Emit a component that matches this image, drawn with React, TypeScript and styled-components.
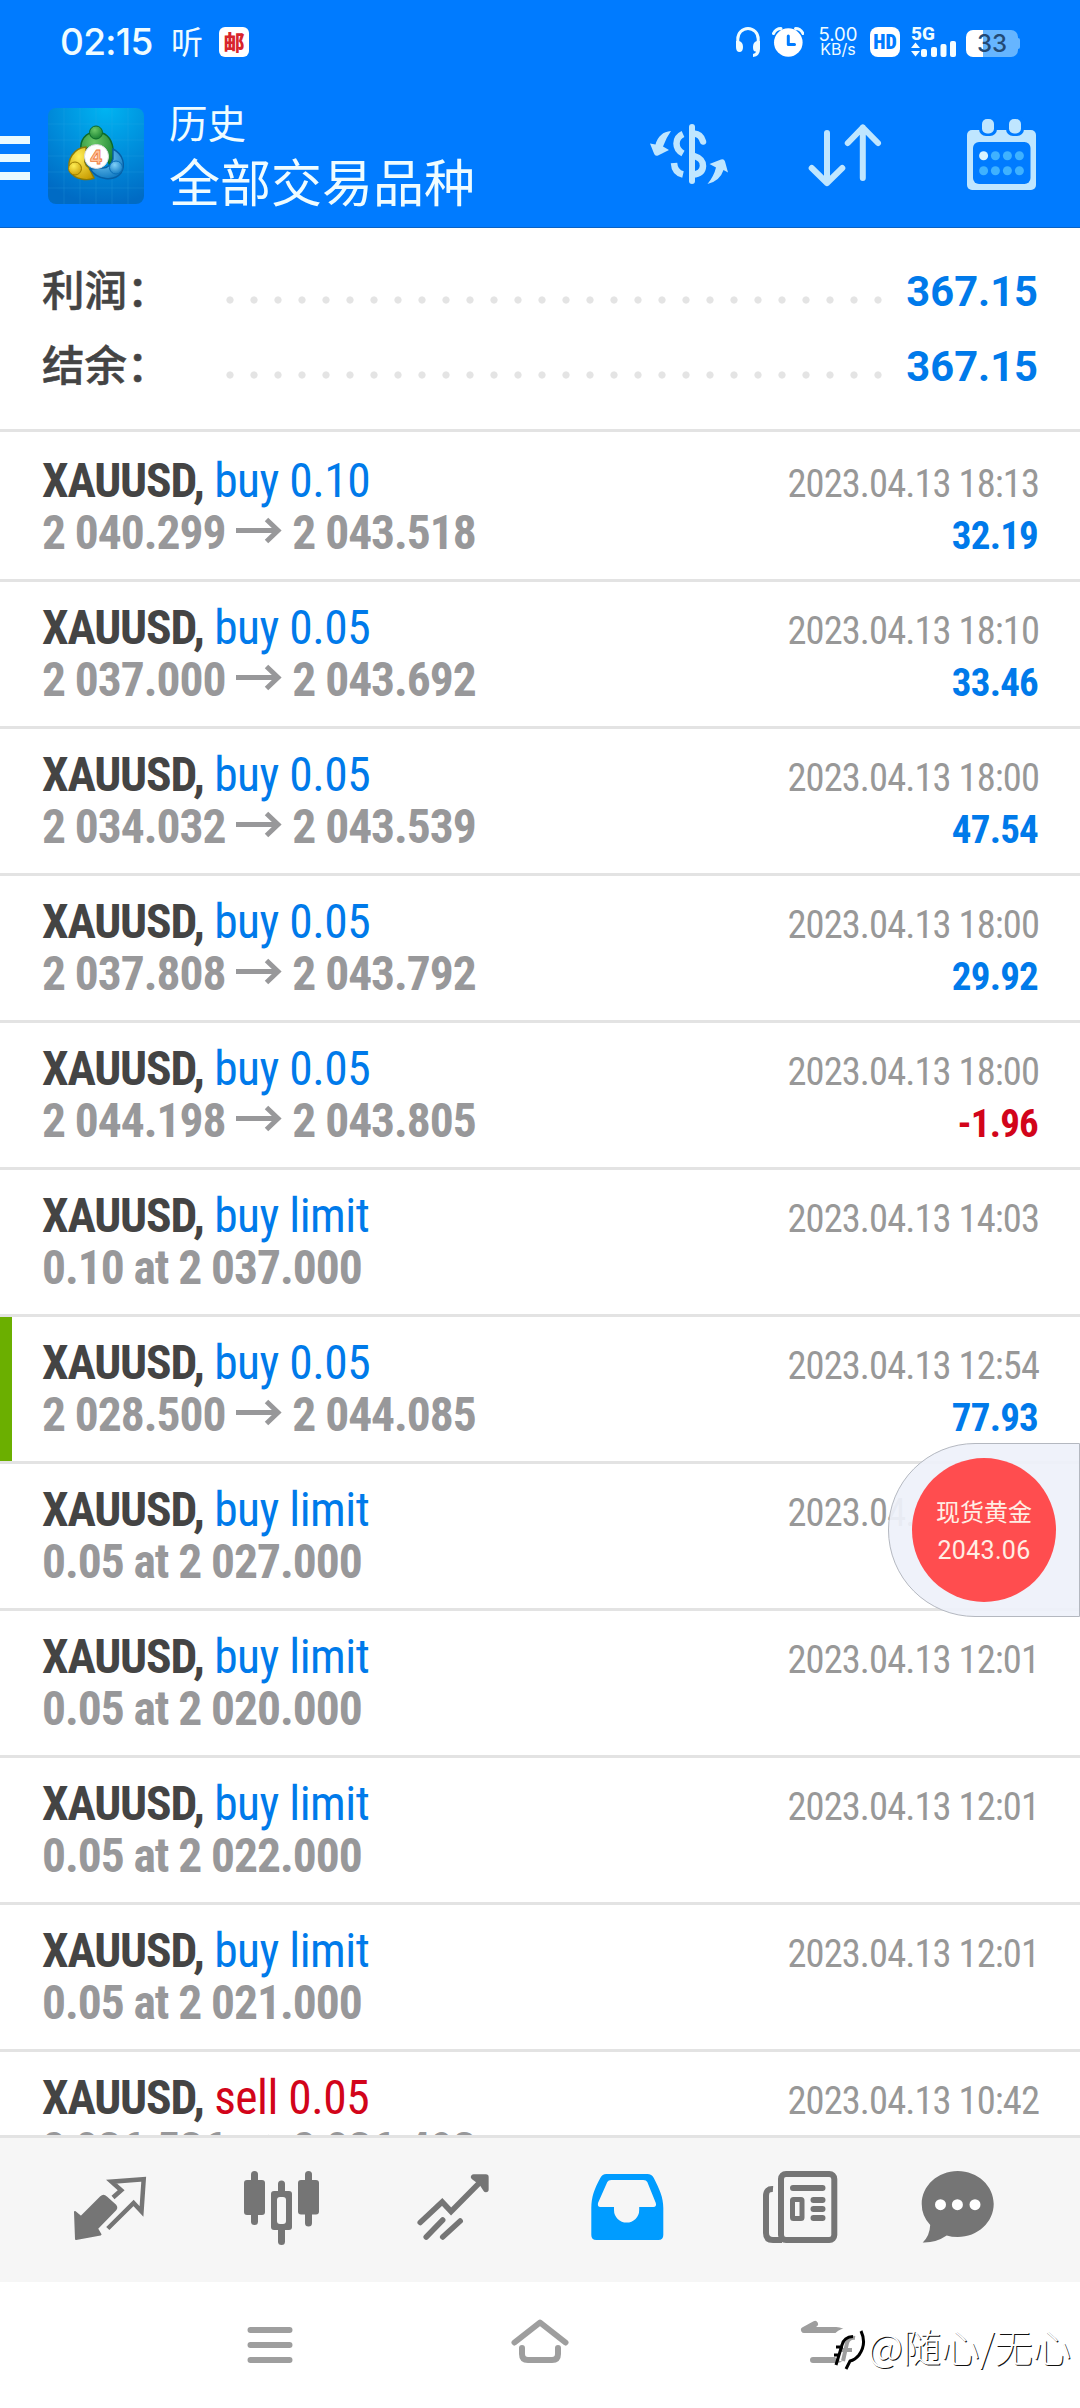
import React from 'react';
import styled, { createGlobalStyle } from 'styled-components';

const BLUE = '#007bff';
const ICE = '#bfe6ff';
const GRAY = '#757575';

const GlobalStyle = createGlobalStyle`
  * { box-sizing: border-box; }
  body { margin: 0; background: #fff; }
`;

const Screen = styled.div`
  position: relative;
  width: 1080px;
  height: 2408px;
  display: flex;
  flex-direction: column;
  overflow: hidden;
  background: #fff;
  font-family: Roboto, 'Noto Sans CJK SC', sans-serif;
  white-space: nowrap;
`;

const Header = styled.header`
  flex: none;
  height: 228px;
  background: ${BLUE};
  border-bottom: 1px solid #0a62c4;
  color: #effcff;
`;

const StatusBar = styled.div`
  height: 84px;
  padding: 0 60px 0 60px;
  display: flex;
  align-items: center;
  justify-content: space-between;
`;

const StatusGroup = styled.div`
  display: flex;
  align-items: center;
  height: 30px;
`;

const Clock = styled.span`
  width: 111px;
  font: 500 37px/30px Inter, sans-serif;
  letter-spacing: -0.7px;
`;

const ListenMark = styled.span`
  width: 48px;
  padding-bottom: 4px;
  font: 400 32px/30px 'Noto Sans CJK SC', sans-serif;
`;

const MailBadge = styled.span`
  width: 30px;
  height: 30px;
  border-radius: 6px;
  background: #fff;
  color: #d8252c;
  text-align: center;
  font: 900 21px/28px 'Noto Sans CJK SC', sans-serif;
`;

const NetSpeed = styled.div`
  width: 40px;
  margin-left: 14px;
  display: flex;
  flex-direction: column;
  align-items: center;
  font: 400 18.6px/15px Inter, sans-serif;
`;

const SpeedUnit = styled.span`
  font-size: 16px;
`;

const HdBadge = styled.span`
  width: 30px;
  height: 30px;
  margin-left: 12px;
  border-radius: 8px;
  background: #fff;
  color: ${BLUE};
  text-align: center;
  font: 900 20px/31px 'Roboto Condensed', sans-serif;
`;

const Signal = styled.div`
  width: 46px;
  height: 30px;
  margin-left: 11px;
  display: flex;
  flex-direction: column;
  font: 800 19px/14px Roboto, sans-serif;
`;

const Battery = styled.div`
  width: 52px;
  height: 27px;
  margin: 3px 0 0 9px;
  border-radius: 7px;
  background: linear-gradient(90deg, #fff 17px, #66b5ff 17px);
  color: #234a75;
  text-align: center;
  font: 500 24px/28px Inter, sans-serif;
`;

const BatteryTip = styled.span`
  width: 2px;
  height: 11px;
  margin-top: 3px;
  border-radius: 0 2px 2px 0;
  background: #66b5ff;
`;

const TitleBar = styled.div`
  height: 143px;
  display: flex;
  align-items: flex-start;
`;

const MenuBars = styled.div`
  width: 30px;
  padding-top: 52px;
  display: flex;
  flex-direction: column;
  gap: 10px;
`;

const MenuBar = styled.span`
  height: 8px;
  background: #e9faff;
`;

const Logo = styled.svg`
  margin: 24px 0 0 18px;
  flex: none;
`;

const Titles = styled.div`
  width: 480px;
  padding: 13px 0 0 25px;
  display: flex;
  flex-direction: column;
  font-family: 'Noto Sans CJK SC', sans-serif;
`;

const Section = styled.span`
  font-size: 38.5px;
  line-height: 49px;
`;

const Heading = styled.h1`
  margin: 0;
  font-size: 51px;
  font-weight: 400;
  line-height: 68px;
`;

const Actions = styled.div`
  display: flex;
  padding: 32px 0 0 26px;
`;

const Summary = styled.section`
  flex: none;
  height: 204px;
  padding: 22px 42px 0;
  border-bottom: 3px solid #e3e3e3;
`;

const SummaryRow = styled.div`
  height: 75px;
  display: flex;
  align-items: baseline;
  justify-content: space-between;
  line-height: 75px;
`;

const SummaryLabel = styled.span`
  width: 176px;
  color: #444;
  font: 500 42.5px/75px 'Noto Sans CJK SC', sans-serif;
  -webkit-text-stroke: 0.5px #444;
`;

const Dots = styled.span`
  width: 672px;
  height: 12px;
  background: radial-gradient(circle at 12px 6px, #e4e4e4 3.2px, transparent 4px) 0 0 / 24px 12px repeat-x;
`;

const SummaryValue = styled.span`
  flex: 1;
  text-align: right;
  color: #007aea;
  font-size: 41.7px;
  font-weight: 700;
`;

const DealList = styled.main`
  flex: none;
  height: 1703px;
  padding-top: 3px;
  overflow: hidden;
`;

const Deal = styled.article`
  height: 147px;
  display: flex;
  border-bottom: 3px solid #e3e3e3;
`;

const Marker = styled.span<{ $on?: boolean }>`
  width: 12px;
  background: ${p => (p.$on ? '#6baf00' : 'transparent')};
`;

const DealBody = styled.div`
  flex: 1;
  padding: 21px 42px 0 30px;
  font-family: 'Roboto Condensed', Roboto, sans-serif;
`;

const Line = styled.div`
  height: 51.5px;
  display: flex;
  align-items: baseline;
  justify-content: space-between;
  line-height: 51.5px;
`;

const DealTitle = styled.div`
  display: flex;
  gap: 10.5px;
  font-size: 47.5px;
`;

const Ticker = styled.span`
  color: #444;
  font-weight: 700;
  letter-spacing: -1.2px;
`;

const Operation = styled.span<{ $sell?: boolean }>`
  color: ${p => (p.$sell ? '#d2041a' : '#007aea')};
  letter-spacing: -0.5px;
`;

const Prices = styled.div`
  display: flex;
  align-items: baseline;
  gap: 10.5px;
  color: #98989a;
  font-size: 47.5px;
  font-weight: 700;
  letter-spacing: -1.05px;
`;

const Time = styled.span`
  margin-right: -1px;
  color: #989898;
  font-size: 38.5px;
  letter-spacing: -0.92px;
`;

const Profit = styled.span<{ $loss?: boolean }>`
  color: ${p => (p.$loss ? '#d2041a' : '#007aea')};
  font-size: 39px;
  font-weight: 700;
  letter-spacing: -0.8px;
`;

const TabBar = styled.nav`
  flex: none;
  height: 147px;
  padding: 0 20px;
  display: flex;
  border-top: 3px solid #e3e3e3;
  background: #f6f6f6;
`;

const Tab = styled.div`
  flex: 1;
  display: flex;
  align-items: flex-start;
  justify-content: center;
  padding-top: 27px;
`;

const SystemBar = styled.footer`
  flex: none;
  height: 126px;
  padding: 34px 90px 0;
  display: flex;
  justify-content: space-between;
`;

const FloatingQuote = styled.aside`
  position: absolute;
  right: 0;
  top: 1443px;
  width: 192px;
  height: 174px;
  padding: 14px 0 0 23px;
  border: 1px solid #b4b8c0;
  border-radius: 87px 0 0 87px;
  background: rgba(238, 241, 250, 0.93);
`;

const QuoteDisc = styled.div`
  width: 144px;
  height: 144px;
  padding-top: 33px;
  border-radius: 50%;
  background: #ff4d4f;
  color: #ffeee4;
  text-align: center;
`;

const QuoteName = styled.div`
  font: 400 24px/40px 'Noto Sans CJK SC', sans-serif;
`;

const QuotePrice = styled.div`
  font-size: 25px;
  line-height: 40px;
  letter-spacing: 0.3px;
`;

const Watermark = styled.div`
  position: absolute;
  left: 830px;
  top: 2321px;
  display: flex;
  align-items: center;
  gap: 2px;
  color: #fff;
  font: 300 38.3px/46px 'Noto Sans CJK SC', sans-serif;
  text-shadow: 1px 1px 0 #111;
`;

type Item = {
  op: string; time: string; sell?: boolean; marked?: boolean;
  from?: string; to?: string; order?: string; profit?: string;
};

const deals: Item[] = [
  { op: 'buy 0.10', time: '2023.04.13 18:13', from: '2 040.299', to: '2 043.518', profit: '32.19' },
  { op: 'buy 0.05', time: '2023.04.13 18:10', from: '2 037.000', to: '2 043.692', profit: '33.46' },
  { op: 'buy 0.05', time: '2023.04.13 18:00', from: '2 034.032', to: '2 043.539', profit: '47.54' },
  { op: 'buy 0.05', time: '2023.04.13 18:00', from: '2 037.808', to: '2 043.792', profit: '29.92' },
  { op: 'buy 0.05', time: '2023.04.13 18:00', from: '2 044.198', to: '2 043.805', profit: '-1.96' },
  { op: 'buy limit', time: '2023.04.13 14:03', order: '0.10 at 2 037.000' },
  { op: 'buy 0.05', time: '2023.04.13 12:54', from: '2 028.500', to: '2 044.085', profit: '77.93', marked: true },
  { op: 'buy limit', time: '2023.04.13 12:01', order: '0.05 at 2 027.000' },
  { op: 'buy limit', time: '2023.04.13 12:01', order: '0.05 at 2 020.000' },
  { op: 'buy limit', time: '2023.04.13 12:01', order: '0.05 at 2 022.000' },
  { op: 'buy limit', time: '2023.04.13 12:01', order: '0.05 at 2 021.000' },
  { op: 'sell 0.05', time: '2023.04.13 10:42', from: '2 036.536', to: '2 036.493', sell: true },
];

const Arrow = () => (
  <svg width="46" height="33" viewBox="0 0 46 33" fill="none" stroke="#98989a" strokeWidth="5">
    <path d="M0 14.5H42M30.5 3.5L42 14.5L30.5 25.5" />
  </svg>
);

const MetaLogo = () => (
  <Logo width="96" height="96" viewBox="0 0 96 96">
    <defs>
      <radialGradient id="bg" cx="0.6" cy="0" r="1"><stop offset="0" stopColor="#00b4f2" /><stop offset="0.6" stopColor="#0088d8" /><stop offset="1" stopColor="#006bc4" /></radialGradient>
      <radialGradient id="g" cx="0.4" cy="0.3" r="0.8"><stop offset="0" stopColor="#6cc868" /><stop offset="1" stopColor="#0f7a2c" /></radialGradient>
      <radialGradient id="y" cx="0.4" cy="0.3" r="0.8"><stop offset="0" stopColor="#ffee55" /><stop offset="1" stopColor="#c79a00" /></radialGradient>
      <radialGradient id="b" cx="0.4" cy="0.3" r="0.8"><stop offset="0" stopColor="#7fd0f8" /><stop offset="1" stopColor="#0672bd" /></radialGradient>
    </defs>
    <rect width="96" height="96" rx="8" fill="url(#bg)" />
    <path d="M16 0V96M32 0V96M48 0V96M64 0V96M80 0V96M0 16H96M0 32H96M0 48H96M0 64H96M0 80H96" stroke="#3bb8f0" strokeOpacity="0.18" />
    <path d="M48 24C37 24 32 33 33 41L43 40Q48 34 55 40L62 58Q67 48 65 40C63 29 57 24 48 24Z" fill="url(#g)" stroke="#0c6a2a" strokeWidth="1.4" />
    <path d="M38 39C26 40 18 52 22 63C26 72 40 73 46 70L41 60Q34 55 38 46Z" fill="url(#y)" stroke="#8b7a08" strokeWidth="1.4" />
    <path d="M65 41C75 46 78 57 73 65C66 74 49 72 42 61L53 60Q62 61 65 51Z" fill="url(#b)" stroke="#075fa4" strokeWidth="1.4" />
    <circle cx="48" cy="24.500" r="6.500" fill="url(#g)" stroke="#0c6a2a" />
    <circle cx="27" cy="60.500" r="6.500" fill="url(#y)" stroke="#9b7d00" />
    <circle cx="68" cy="59.500" r="6.500" fill="url(#b)" stroke="#0a6fb8" />
    <circle cx="48.500" cy="48.500" r="12" fill="#fff" stroke="#dadfe2" />
    <text x="48.300" y="55.500" textAnchor="middle" fontFamily="Inter, sans-serif" fontSize="19" fontWeight="700" fill="#ffc29a" stroke="#ee7a3a" strokeWidth="0.8">4</text>
  </Logo>
);

const App = () => (
  <>
    <GlobalStyle />
    <Screen>
      <Header>
        <StatusBar>
          <StatusGroup>
            <Clock>02:15</Clock>
            <ListenMark>听</ListenMark>
            <MailBadge>邮</MailBadge>
          </StatusGroup>
          <StatusGroup>
            <svg width="24" height="30" viewBox="0 0 24 30" fill="none">
              <path d="M1.800 19V12A10.200 10.500 0 0 1 22.200 12V19" stroke="#effcff" strokeWidth="3" />
              <path d="M0 14H3Q7 15 7 20T3.500 25Q0 25 0 20ZM24 14H21Q17 15 17 20T20 24.500Q20 26 17 27V30Q24 29 24 22Z" fill="#effcff" />
            </svg>
            <svg width="44" height="30" viewBox="-12 0 44 30" fill="none">
              <circle cx="16.300" cy="15.500" r="14.300" fill="#fff" />
              <path d="M1.500 6.500Q4 1.500 9 1.500M31 6.500Q28.500 1.500 23.500 1.500" stroke="#effcff" strokeWidth="3" strokeLinecap="round" />
              <path d="M16.300 9V17.500H22.500" stroke={BLUE} strokeWidth="3" strokeLinecap="round" strokeLinejoin="round" />
            </svg>
            <NetSpeed><span>5.00</span><SpeedUnit>KB/s</SpeedUnit></NetSpeed>
            <HdBadge>HD</HdBadge>
            <Signal>
              5G
              <svg width="46" height="16" viewBox="0 0 46 16" fill="#f4fdff">
                <path d="M4.500 1.500L9 7H0ZM4.500 15.500L9 10H0Z" />
                <rect x="10" y="8" width="6" height="8" rx="2" /><rect x="20" y="6" width="6" height="10" rx="2" />
                <rect x="29.500" y="3" width="6" height="13" rx="2" /><rect x="39" y="0" width="6" height="16" rx="2" />
              </svg>
            </Signal>
            <Battery>33</Battery>
            <BatteryTip />
          </StatusGroup>
        </StatusBar>
        <TitleBar>
          <MenuBars><MenuBar /><MenuBar /><MenuBar /></MenuBars>
          <MetaLogo />
          <Titles>
            <Section>历史</Section>
            <Heading>全部交易品种</Heading>
          </Titles>
          <Actions>
            <svg width="80" height="80" viewBox="651 116 80 80" fill="none" stroke={ICE} strokeWidth="6.500">
              <path d="M693 127V181" strokeWidth="6" strokeLinecap="round" />
              <path d="M684 134Q677.500 137 677.500 143.500T684 153.500" />
              <path d="M695 133.500Q702 134 704 141.500" strokeLinecap="round" />
              <path d="M694 155.500C700.500 157.500 704 160 704 166Q703.500 174 694 174.500" />
              <path d="M675 163Q675.500 172.500 684 174.500" />
              <path d="M672 131Q660 132 656.500 144.500L651 143.500L655 153.500Q656 156.500 659 155.500L670 150L664 146.500Q667 138 672 131Z" fill={ICE} stroke="none" />
              <path d="M708.500 184Q721 181 724.500 170L729 172.500L726 161.500Q725 158.500 722 159.500L710.500 164L717 167.500Q715 176 708.500 184Z" fill={ICE} stroke="none" />
            </svg>
            <svg width="153" height="80" viewBox="731 116 153 80" fill="none" stroke={ICE} strokeWidth="6" strokeLinecap="round" strokeLinejoin="round">
              <path d="M828 133V183M812.700 168L828 183L843.300 168M863.800 178V127.500M848.800 143L863.800 127.500L879 143" />
            </svg>
            <svg width="155" height="80" viewBox="884 116 155 80" fill={ICE}>
              <rect x="968" y="130" width="69" height="60" rx="5" />
              <rect x="974" y="142" width="57.500" height="42" rx="6" fill={BLUE} />
              <rect x="980" y="116" width="18" height="20" rx="7" fill={BLUE} />
              <rect x="1007" y="116" width="18" height="20" rx="7" fill={BLUE} />
              <rect x="983" y="119" width="12" height="14.500" rx="5" />
              <rect x="1010" y="119" width="12" height="14.500" rx="5" />
              {[155.700, 170.700].map((y, r) => [984.600, 996.400, 1008.400, 1020.400].map((x, c) => (
                <circle key={`${r}${c}`} cx={x} cy={y} r="4.500" fill={r + c === 0 ? '#d9f4ff' : '#3fb2ff'} />
              )))}
            </svg>
          </Actions>
        </TitleBar>
      </Header>

      <Summary>
        {['利润：', '结余：'].map(label => (
          <SummaryRow key={label}>
            <SummaryLabel>{label}</SummaryLabel>
            <Dots />
            <SummaryValue>367.15</SummaryValue>
          </SummaryRow>
        ))}
      </Summary>

      <DealList>
        {deals.map((d, i) => (
          <Deal key={i}>
            <Marker $on={d.marked} />
            <DealBody>
              <Line>
                <DealTitle><Ticker>XAUUSD,</Ticker><Operation $sell={d.sell}>{d.op}</Operation></DealTitle>
                <Time>{d.time}</Time>
              </Line>
              <Line>
                {d.order ? <Prices>{d.order}</Prices> : <Prices><span>{d.from}</span><Arrow /><span>{d.to}</span></Prices>}
                {d.profit && <Profit $loss={d.profit.startsWith('-')}>{d.profit}</Profit>}
              </Line>
            </DealBody>
          </Deal>
        ))}
      </DealList>

      <TabBar>
        <Tab>
          <svg width="80" height="90" viewBox="67 2165 80 90" fill="none" stroke={GRAY} strokeWidth="4.500">
            <path d="M75 2212L81 2217L101 2197Q103.500 2194.500 106 2197L115.500 2205.500Q117 2207.500 115.500 2209.500L97 2228.500L100.500 2234.500L76 2239Z" fill={GRAY} strokeWidth="2" strokeLinejoin="round" />
            <path d="M113 2197.500L121.200 2190.300L111.500 2181.700L143.700 2179.300L141.500 2211.500L133.600 2203L107.800 2228.500" />
          </svg>
        </Tab>
        <Tab>
          <svg width="80" height="90" viewBox="240 2165 80 90" fill={GRAY}>
            <rect x="244" y="2180" width="21" height="35" rx="3" /><rect x="251" y="2171" width="7" height="54" rx="3.500" />
            <rect x="298" y="2180" width="21" height="34.500" rx="3" /><rect x="305" y="2171" width="7" height="55.500" rx="3.500" />
            <rect x="278" y="2180.500" width="7" height="64.500" rx="3.500" /><rect x="271" y="2191" width="21" height="39" rx="3" />
            <rect x="277" y="2197" width="9" height="27" rx="3" fill="#f6f6f6" />
          </svg>
        </Tab>
        <Tab>
          <svg width="80" height="90" viewBox="413.300 2165 80 90" fill="none" stroke={GRAY} strokeWidth="5.500" strokeLinecap="round">
            <path d="M420.500 2222.500L442.500 2202L451.400 2211.500L484 2178.500" strokeLinejoin="miter" />
            <path d="M474 2177H486.200V2189.500L482 2183Z" strokeLinejoin="round" />
            <path d="M426.500 2237L443 2220M443 2237L460.500 2221" />
          </svg>
        </Tab>
        <Tab>
          <svg width="80" height="90" viewBox="586.700 2165 80 90">
            <path fillRule="evenodd" fill="#009cff" d="M606 2174H647Q651.500 2174 653.500 2178C659 2189 663 2197 663 2208V2235Q663 2240 658 2240H596Q591 2240 591 2235V2208C591 2197 594 2189 600 2178Q602 2174 606 2174ZM611 2180Q608 2180 607 2182L597.700 2203Q597 2207 600 2207H613.700V2210A12.600 12.600 0 0 0 638.900 2210V2207H653Q656.500 2207 655.500 2203L647 2182Q646 2180 643 2180Z" />
          </svg>
        </Tab>
        <Tab>
          <svg width="80" height="90" viewBox="760 2165 80 90" fill="none" stroke={GRAY} strokeWidth="6">
            <rect x="781" y="2174" width="53.300" height="66" rx="5" />
            <path d="M773 2189Q766 2188.500 766 2196V2233Q766 2240 773 2240H782" />
            <path d="M793 2188H822.500M813.500 2200H822.500M813.500 2209H822.500M813.500 2218H822.500" strokeLinecap="round" />
            <rect x="792.500" y="2199.500" width="9.500" height="19" rx="1" strokeWidth="5" />
          </svg>
        </Tab>
        <Tab>
          <svg width="110" height="90" viewBox="918.300 2165 110 90" fill={GRAY}>
            <path d="M958 2171C978 2171 994 2186 994 2204S978 2237 958 2237Q952 2237 947 2235.500Q936 2243 923 2242.500Q930 2236 930.500 2225Q922 2216 922 2204C922 2186 938 2171 958 2171Z" />
            <circle cx="940.800" cy="2204.700" r="5.500" fill="#fff" /><circle cx="957.700" cy="2204.700" r="5.500" fill="#fff" /><circle cx="975.300" cy="2204.700" r="5.500" fill="#fff" />
          </svg>
        </Tab>
      </TabBar>

      <SystemBar>
        <svg width="360" height="60" viewBox="90 2316 360 60" stroke="#9e9e9e" strokeWidth="6" strokeLinecap="round">
          <path d="M250.500 2330H289.500M250.500 2345H289.500M250.500 2360H289.500" />
        </svg>
        <svg width="70" height="60" viewBox="505 2316 70 60" fill="none" stroke="#9e9e9e" strokeWidth="6" strokeLinecap="round" strokeLinejoin="round">
          <path d="M514.500 2342.500L540 2322.500L565.500 2342.500M522 2348V2354Q522 2360 528 2360H552Q558 2360 558 2354V2348" />
        </svg>
        <svg width="360" height="60" viewBox="630 2316 360 60" fill="none" stroke="#9e9e9e" strokeWidth="6" strokeLinecap="round" strokeLinejoin="round">
          <path d="M815 2324L804 2330H836Q848 2331 848 2345T836 2360H813" />
        </svg>
      </SystemBar>

      <FloatingQuote>
        <QuoteDisc>
          <QuoteName>现货黄金</QuoteName>
          <QuotePrice>2043.06</QuotePrice>
        </QuoteDisc>
      </FloatingQuote>

      <Watermark>
        <svg width="36" height="50" viewBox="830 2321 36 50" fill="none">
          <path d="M848 2328C858 2328 865 2335 865 2345S858 2363 847 2364L842 2366L843 2362C835 2360 831 2353 831 2345C831 2335 838 2328 848 2328Z" fill="#fff" />
          <path d="M843 2361L847 2343Q849 2337 855 2338M841 2350H852" stroke="#9e9e9e" strokeWidth="4" />
          <path d="M836 2365L842 2345Q844 2337 853 2336.500M836 2347H843M834 2355H839" stroke="#000" strokeWidth="3" />
          <path d="M861 2331Q867 2344 859 2355Q855 2360 850 2361L846 2369" stroke="#000" strokeWidth="3" />
        </svg>
        <span>@随心/无心</span>
      </Watermark>
    </Screen>
  </>
);

export default App;
